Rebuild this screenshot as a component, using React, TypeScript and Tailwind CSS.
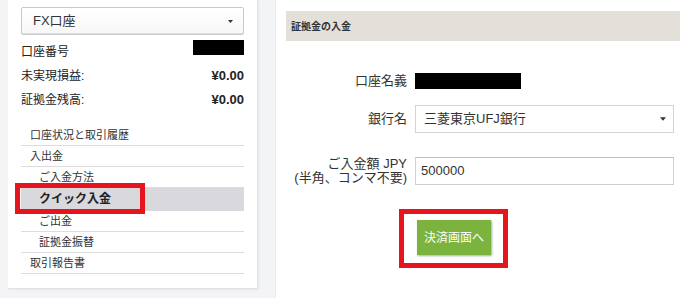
import React from 'react';

const font = { fontFamily: '"Liberation Sans", "Noto Sans CJK JP", sans-serif' };

const Caret: React.FC<{ w?: number; h?: number }> = ({ w = 7, h = 4 }) => (
  <svg width={w} height={h} viewBox="0 0 7 4" className="shrink-0">
    <path d="M0 0h7L3.5 4z" fill="#333" />
  </svg>
);

const menu: { label: string; indent?: boolean; active?: boolean }[] = [
  { label: '口座状況と取引履歴' },
  { label: '入出金' },
  { label: 'ご入金方法', indent: true },
  { label: 'クイック入金', indent: true, active: true },
  { label: 'ご出金', indent: true },
  { label: '証拠金振替', indent: true },
  { label: '取引報告書' },
];

const App: React.FC = () => {
  return (
    <div className="w-[690px] h-[298px] bg-[#f3f4f6] flex overflow-hidden text-[#222]" style={font}>
      {/* ── Left card ── */}
      <div className="pl-2 pr-[17px] w-[275px] shrink-0">
        <div className="w-[250px] h-[289px] bg-white border-r border-b border-[#e2e2e4] shadow-[1px_1px_2px_rgba(0,0,0,0.06)] px-[13px] pt-[7px]">
          {/* account select */}
          <div className="h-[28px] flex items-center justify-between pl-[11px] pr-[10px] border border-[#c9c9c9] rounded-[2px] bg-gradient-to-b from-white to-[#f7f7f7] shadow-[inset_0_-1px_0_#e0e0e0]">
            <span className="text-[13px] text-[#333]">FX口座</span>
            <Caret w={5} h={3} />
          </div>

          <div className="mt-[5px] text-[12px]">
            <div className="h-6 flex items-center justify-between">
              <span>口座番号</span>
              <span className="w-[51px] h-[15px] bg-black -mt-[9px]" />
            </div>
            <div className="h-6 flex items-center justify-between">
              <span>未実現損益:</span>
              <span className="font-bold text-[13px]">¥0.00</span>
            </div>
            <div className="h-6 flex items-center justify-between">
              <span>証拠金残高:</span>
              <span className="font-bold text-[13px]">¥0.00</span>
            </div>
          </div>

          {/* menu */}
          <div className="mt-[13px] text-[11px] text-[#333]">
            {menu.map((m) =>
              m.active ? (
                <div key={m.label} className="relative h-[23px] flex items-center pl-[18px] bg-[#d9d8dd] border-b border-[#d9d8dd] font-bold text-[12px] text-[#222]">
                  {m.label}
                  <span className="absolute left-[-6px] top-[-5px] w-[130px] h-[31px] border-[5px] border-[#e5141d]" />
                </div>
              ) : (
                <div
                  key={m.label}
                  className={`h-[21px] flex items-center border-b border-[#dddddd] ${m.indent ? 'pl-[18px]' : 'pl-[9px]'}`}
                >
                  {m.label}
                </div>
              )
            )}
          </div>
        </div>
      </div>

      {/* ── Right panel ── */}
      <div className="flex-1 bg-white border-l border-[#ececee] pl-[10px] pr-[10px] pt-[11px]">
        <div className="h-[30px] bg-[#e3e0d9] flex items-center pl-[5px] text-[10px] font-bold text-[#333]">
          証拠金の入金
        </div>

        <div className="grid grid-cols-[121px_1fr] gap-x-2 pr-[6px] mt-[32px] text-[13px] text-[#333]">
          <div className="h-4 flex items-center justify-end">口座名義</div>
          <div className="h-4">
            <div className="w-[106px] h-4 bg-black" />
          </div>

          <div className="mt-4 h-[28px] flex items-center justify-end">銀行名</div>
          <div className="mt-4 h-[28px] flex items-center justify-between pl-2 pr-[7px] border border-[#d4d4d4] bg-white">
            <span>三菱東京UFJ銀行</span>
            <Caret w={6} h={4} />
          </div>

          <div className="mt-[24px] h-[28px] flex flex-col items-end justify-center leading-[14px] text-right">
            <span>ご入金額 JPY</span>
            <span>(半角、コンマ不要)</span>
          </div>
          <div className="mt-[24px] h-[28px] flex items-center pl-[5px] border border-[#cfcfcf] border-t-[#bdbdbd] bg-white">
            500000
          </div>

          <div />
          <div className="mt-[35px] pl-[2px]">
            <div className="relative w-[74px]">
              <button className="w-[74px] h-[35px] bg-[#7bb33e] text-white text-[12px] shadow-[1px_1px_2px_rgba(0,0,0,0.35)]">
                決済画面へ
              </button>
              <span className="absolute left-[-18px] right-[-17px] top-[-11px] bottom-[-13px] border-[5px] border-[#e5141d]" />
            </div>
          </div>
        </div>
      </div>
    </div>
  );
};

export default App;
